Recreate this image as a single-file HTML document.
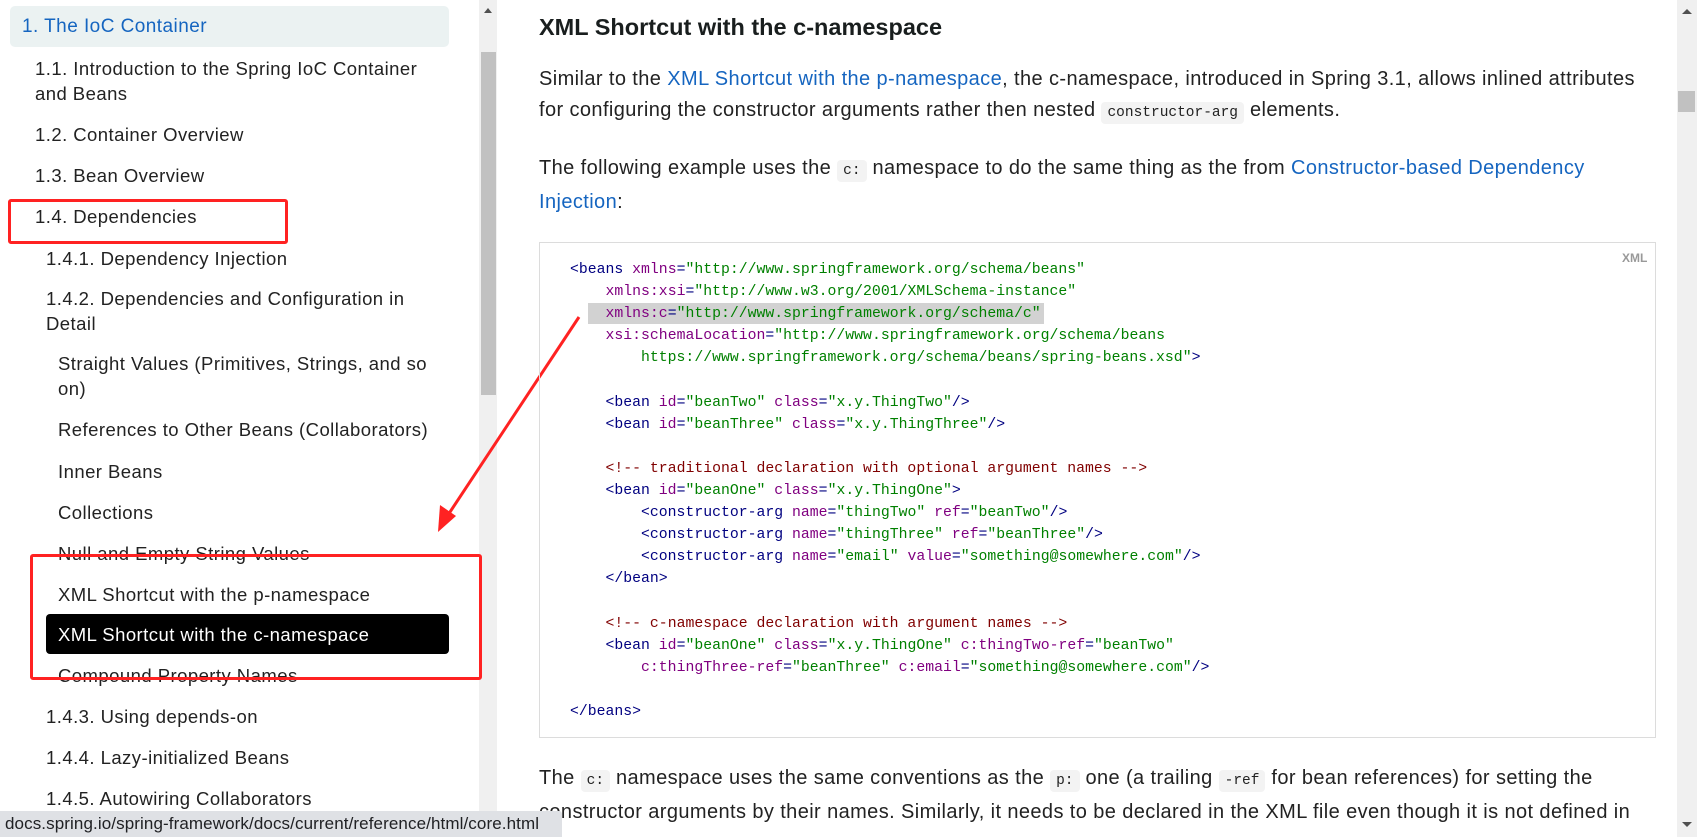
<!DOCTYPE html>
<html><head><meta charset="utf-8"><style>
*{margin:0;padding:0;box-sizing:border-box}
body{width:1697px;height:837px;overflow:hidden;background:#fff;font-family:"Liberation Sans",sans-serif;position:relative;color:#191e1e}
.a{position:absolute;white-space:nowrap}
.s{font-size:18.5px;letter-spacing:0.45px;color:#222;line-height:25px}
.m{font-size:20px;letter-spacing:0.4px;line-height:31px;color:#222}
a{color:#1565c0;text-decoration:none}
code{font-family:"Liberation Mono",monospace;font-size:14.5px;letter-spacing:0;background:#f3f3f3;border-radius:4px;padding:3px 6px;color:#222}
pre.a{white-space:pre;font-family:"Liberation Mono",monospace;font-size:14.8px;line-height:22.1px;color:#000080}
.n{color:#800080}.v{color:#008000}.c{color:#800000}
</style></head><body>
<!-- sidebar -->
<div class="a" style="left:10px;top:6px;width:439px;height:41px;background:#ebf2f2;border-radius:5px"></div>
<div class="a s" style="left:22px;top:14px;color:#1565c0;font-size:19px">1. The IoC Container</div>
<div class="a s" style="left:35px;top:56px">1.1. Introduction to the Spring IoC Container<br>and Beans</div>
<div class="a s" style="left:35px;top:122px">1.2. Container Overview</div>
<div class="a s" style="left:35px;top:163px">1.3. Bean Overview</div>
<div class="a s" style="left:35px;top:204px">1.4. Dependencies</div>
<div class="a s" style="left:46px;top:246px">1.4.1. Dependency Injection</div>
<div class="a s" style="left:46px;top:286px">1.4.2. Dependencies and Configuration in<br>Detail</div>
<div class="a s" style="left:58px;top:351px">Straight Values (Primitives, Strings, and so<br>on)</div>
<div class="a s" style="left:58px;top:417px">References to Other Beans (Collaborators)</div>
<div class="a s" style="left:58px;top:459px">Inner Beans</div>
<div class="a s" style="left:58px;top:500px">Collections</div>
<div class="a s" style="left:58px;top:541px">Null and Empty String Values</div>
<div class="a s" style="left:58px;top:582px">XML Shortcut with the p-namespace</div>
<div class="a" style="left:46px;top:614px;width:403px;height:40px;background:#000;border-radius:4px"></div>
<div class="a s" style="left:58px;top:622px;color:#fff">XML Shortcut with the c-namespace</div>
<div class="a s" style="left:58px;top:663px">Compound Property Names</div>
<div class="a s" style="left:46px;top:704px">1.4.3. Using depends-on</div>
<div class="a s" style="left:46px;top:745px">1.4.4. Lazy-initialized Beans</div>
<div class="a s" style="left:46px;top:786px">1.4.5. Autowiring Collaborators</div>
<!-- sidebar scrollbar -->
<div class="a" style="left:479px;top:0;width:18px;height:837px;background:#f0f0f0"></div>
<div class="a" style="left:481px;top:52px;width:15px;height:343px;background:#c1c1c1"></div>
<div class="a" style="left:484px;top:8px;width:0;height:0;border-left:4px solid transparent;border-right:4px solid transparent;border-bottom:5px solid #505050"></div>
<!-- red boxes -->
<div class="a" style="left:8px;top:199px;width:280px;height:45px;border:3px solid #f22;border-radius:3px"></div>
<div class="a" style="left:30px;top:554px;width:452px;height:126px;border:3px solid #f22;border-radius:3px"></div>
<svg class="a" style="left:0;top:0" width="1697" height="837"><line x1="579" y1="317" x2="448" y2="515" stroke="#f22" stroke-width="3"/><polygon points="438,532 440,505 456,516" fill="#f22"/></svg>
<!-- main -->
<div class="a" style="left:539px;top:14px;font-size:23.5px;font-weight:bold;color:#191e1e">XML Shortcut with the c-namespace</div>
<div class="a m" style="left:539px;top:64px">Similar to the <a>XML Shortcut with the p-namespace</a>, the c-namespace, introduced in Spring 3.1, allows inlined attributes<br>for configuring the constructor arguments rather then nested <code>constructor-arg</code> elements.</div>
<div class="a m" style="left:539px;top:153px">The following example uses the <code>c:</code> namespace to do the same thing as the from <a>Constructor-based Dependency</a><br><a>Injection</a>:</div>
<div class="a" style="left:539px;top:242px;width:1117px;height:496px;border:1px solid #dcdcdc"></div>
<div class="a" style="left:1622px;top:251px;font-size:12px;font-weight:bold;color:#999">XML</div>
<div class="a" style="left:588px;top:303px;width:456px;height:21px;background:#d2d2d2"></div>
<pre class="a" style="left:570px;top:259px">&lt;beans <span class="n">xmlns</span>=<span class="v">"http://www.springframework.org/schema/beans"</span>
    <span class="n">xmlns:xsi</span>=<span class="v">"http://www.w3.org/2001/XMLSchema-instance"</span>
    <span class="n">xmlns:c</span>=<span class="v">"http://www.springframework.org/schema/c"</span>
    <span class="n">xsi:schemaLocation</span>=<span class="v">"http://www.springframework.org/schema/beans
        https://www.springframework.org/schema/beans/spring-beans.xsd"</span>&gt;

    &lt;bean <span class="n">id</span>=<span class="v">"beanTwo"</span> <span class="n">class</span>=<span class="v">"x.y.ThingTwo"</span>/&gt;
    &lt;bean <span class="n">id</span>=<span class="v">"beanThree"</span> <span class="n">class</span>=<span class="v">"x.y.ThingThree"</span>/&gt;

    <span class="c">&lt;!-- traditional declaration with optional argument names --&gt;</span>
    &lt;bean <span class="n">id</span>=<span class="v">"beanOne"</span> <span class="n">class</span>=<span class="v">"x.y.ThingOne"</span>&gt;
        &lt;constructor-arg <span class="n">name</span>=<span class="v">"thingTwo"</span> <span class="n">ref</span>=<span class="v">"beanTwo"</span>/&gt;
        &lt;constructor-arg <span class="n">name</span>=<span class="v">"thingThree"</span> <span class="n">ref</span>=<span class="v">"beanThree"</span>/&gt;
        &lt;constructor-arg <span class="n">name</span>=<span class="v">"email"</span> <span class="n">value</span>=<span class="v">"something@somewhere.com"</span>/&gt;
    &lt;/bean&gt;

    <span class="c">&lt;!-- c-namespace declaration with argument names --&gt;</span>
    &lt;bean <span class="n">id</span>=<span class="v">"beanOne"</span> <span class="n">class</span>=<span class="v">"x.y.ThingOne"</span> <span class="n">c:thingTwo-ref</span>=<span class="v">"beanTwo"</span>
        <span class="n">c:thingThree-ref</span>=<span class="v">"beanThree"</span> <span class="n">c:email</span>=<span class="v">"something@somewhere.com"</span>/&gt;

&lt;/beans&gt;</pre>
<div class="a m" style="left:539px;top:763px">The <code>c:</code> namespace uses the same conventions as the <code>p:</code> one (a trailing <code>-ref</code> for bean references) for setting the<br>constructor arguments by their names. Similarly, it needs to be declared in the XML file even though it is not defined in</div>
<!-- main scrollbar -->
<div class="a" style="left:1677px;top:0;width:20px;height:837px;background:#f0f0f0"></div>
<div class="a" style="left:1678px;top:91px;width:17px;height:21px;background:#c1c1c1"></div>
<div class="a" style="left:1682px;top:9px;width:0;height:0;border-left:5px solid transparent;border-right:5px solid transparent;border-bottom:5px solid #505050"></div>
<div class="a" style="left:1682px;top:822px;width:0;height:0;border-left:5px solid transparent;border-right:5px solid transparent;border-top:5px solid #505050"></div>
<!-- status bar -->
<div class="a" style="left:0;top:811px;width:562px;height:26px;background:#dfe1e5;border-top-right-radius:3px"></div>
<div class="a" style="left:5px;top:814px;font-size:17px;letter-spacing:0.1px;color:#202124">docs.spring.io/spring-framework/docs/current/reference/html/core.html</div>
</body></html>
